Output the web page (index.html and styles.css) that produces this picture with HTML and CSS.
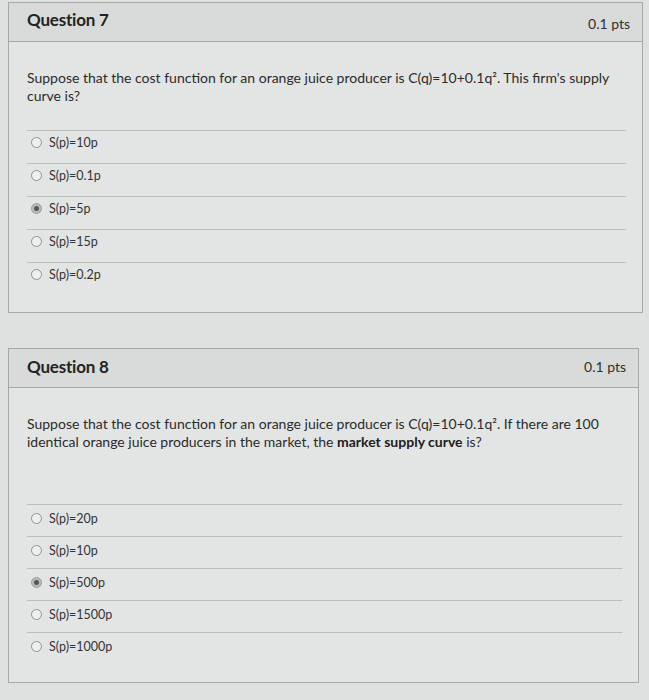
FILE: index.html
```html
<!DOCTYPE html>
<html>
<head>
<meta charset="utf-8">
<link rel="stylesheet" href="styles.css">
</head>
<body>
<div class="page">
  <section class="card card-1">
    <header class="card-head">
      <h2 class="q-title">Question 7</h2>
      <span class="q-pts">0.1 pts</span>
    </header>
    <div class="card-body">
      <p class="q-text">Suppose that the cost function for an orange juice producer is C(q)=10+0.1q². This firm's supply curve is?</p>
      <ul class="answers">
        <li class="answer"><span class="radio"></span><span class="ans-label">S(p)=10p</span></li>
        <li class="answer"><span class="radio"></span><span class="ans-label">S(p)=0.1p</span></li>
        <li class="answer"><span class="radio checked"></span><span class="ans-label">S(p)=5p</span></li>
        <li class="answer"><span class="radio"></span><span class="ans-label">S(p)=15p</span></li>
        <li class="answer"><span class="radio"></span><span class="ans-label">S(p)=0.2p</span></li>
      </ul>
    </div>
  </section>

  <section class="card card-2">
    <header class="card-head">
      <h2 class="q-title">Question 8</h2>
      <span class="q-pts">0.1 pts</span>
    </header>
    <div class="card-body">
      <p class="q-text">Suppose that the cost function for an orange juice producer is C(q)=10+0.1q². If there are 100 identical orange juice producers in the market, the <strong>market supply curve</strong> is?</p>
      <ul class="answers">
        <li class="answer"><span class="radio"></span><span class="ans-label">S(p)=20p</span></li>
        <li class="answer"><span class="radio"></span><span class="ans-label">S(p)=10p</span></li>
        <li class="answer"><span class="radio checked"></span><span class="ans-label">S(p)=500p</span></li>
        <li class="answer"><span class="radio"></span><span class="ans-label">S(p)=1500p</span></li>
        <li class="answer"><span class="radio"></span><span class="ans-label">S(p)=1000p</span></li>
      </ul>
    </div>
  </section>
</div>
</body>
</html>
```

FILE: styles.css
```css
html, body {
  margin: 0;
  padding: 0;
  background: #dfe1e0;
}

body {
  font-family: Lato, "Open Sans", "Liberation Sans", sans-serif;
  color: #2b2c2c;
  width: 649px;
  height: 700px;
  overflow: hidden;
}

.page {
  padding: 2px 0 0 8px;
  display: flex;
  flex-direction: column;
  gap: 35px;
}

.card {
  border: 1px solid #a6a8a8;
  background: #e3e5e4;
  box-sizing: border-box;
}

.card-1 {
  width: 635px;
  height: 311px;
}

.card-2 {
  width: 631px;
  height: 335px;
}

.card-head {
  display: flex;
  justify-content: space-between;
  align-items: center;
  padding: 0 12px 0 18px;
  background: #d9dbda;
  border-bottom: 1px solid #a6a8a8;
  box-sizing: border-box;
}

.card-1 .card-head {
  align-items: flex-start;
  height: 39px;
}

.card-2 .card-head {
  height: 39px;
  padding-bottom: 4px;
}

.q-title {
  margin: 0;
  font-size: 17px;
  font-weight: 700;
  color: #222323;
  letter-spacing: -0.2px;
}

.card-1 .q-title {
  margin-top: 6px;
}

.card-1 .q-pts {
  margin-top: 12px;
}

.q-pts {
  font-size: 14px;
  color: #2f3030;
}

.card-body {
  padding: 0 16px 0 18px;
}

.q-text {
  margin: 0;
  font-size: 14px;
  line-height: 18px;
  color: #2a2b2b;
}

.card-1 .q-text {
  padding: 27px 10px 25px 0;
}

.card-2 .q-text {
  padding: 27px 0 53px 0;
}

.q-text strong {
  font-weight: 700;
  color: #1f2020;
}

.answers {
  list-style: none;
  margin: 0;
  padding: 0;
}

.answer {
  display: flex;
  align-items: center;
  gap: 7px;
  height: 33px;
  padding-left: 4px;
  padding-bottom: 9px;
  border-top: 1px solid #bcbebd;
  box-sizing: border-box;
  font-size: 12.5px;
  color: #333434;
}

.card-2 .answer {
  height: 32px;
  padding-bottom: 4px;
}

.radio {
  width: 9px;
  height: 9px;
  border: 1px solid #8e9090;
  border-radius: 50%;
  background: #eef0ef;
  flex: none;
  position: relative;
}

.radio.checked {
  background: #b9bbba;
  border-color: #9c9e9d;
}

.radio.checked::after {
  content: "";
  position: absolute;
  left: 2px;
  top: 2px;
  width: 5px;
  height: 5px;
  border-radius: 50%;
  background: #555757;
}
```
